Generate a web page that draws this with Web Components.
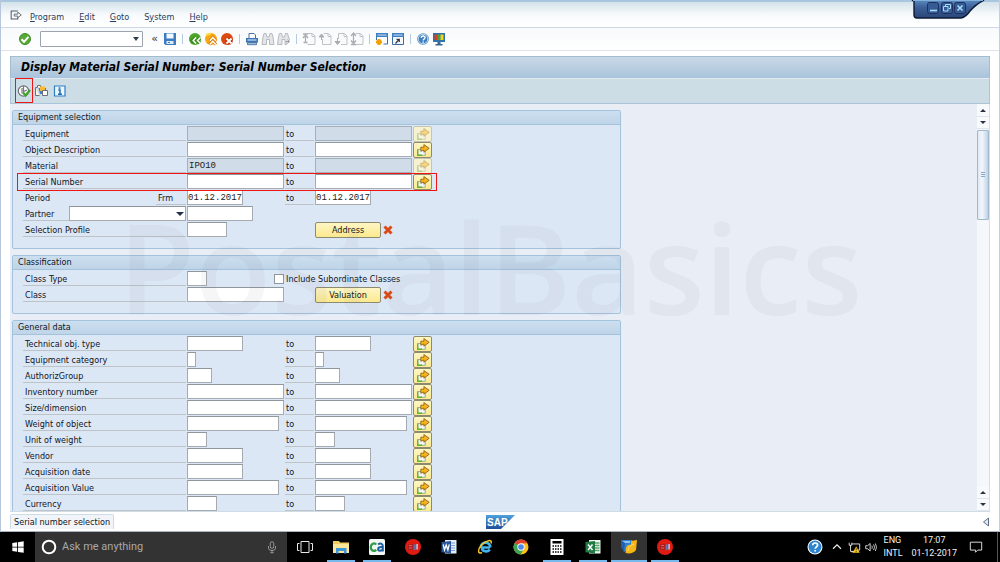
<!DOCTYPE html>
<html lang="en">
<head>
<meta charset="utf-8">
<title>Display Material Serial Number</title>
<style>
html, body { margin: 0; height: 100%; }
body { display: flex; flex-direction: column; overflow: hidden; background: #fff;
  font-family: "DejaVu Sans Condensed", "DejaVu Sans", sans-serif; font-stretch: condensed; font-size: 9px; line-height: 12px; color: #10141c; }
</style>
</head>
<body>
<desk-screen></desk-screen>
<script>
const ICONS = {
  check: '<circle cx="8" cy="8" r="5.500" fill="#58a838" stroke="#3f8f26"/><path d="M4.500 8.200l2.500 2.600 4.500-5" fill="none" stroke="#fff" stroke-width="2"/>',
  save: '<path d="M2 2h12v12H3.500L2 12.500z" fill="#3b7bbf"/><path d="M4.500 2.500h7v5h-7z" fill="#f4f8fc"/><path d="M4.500 10h7v3h-7z" fill="#dfeaf4"/><path d="M6 11.500h2" stroke="#3b7bbf"/>',
  back: '<circle cx="8" cy="8" r="6" fill="#4ea32a"/><path d="M8 7L5.200 9.500 8 12M13 7l-3 2.500L13 12" fill="none" stroke="#3c8c20" stroke-width="3.500"/><path d="M9 6.500L6.200 9.500 9 12.500M13.500 6.500l-3 3 3 3" fill="none" stroke="#fff" stroke-width="1.500"/>',
  exit: '<circle cx="8" cy="8" r="6" fill="#f7a912"/><path d="M3 4l5-1.500" stroke="#ffd84a" stroke-width="2"/><path d="M6.500 10l3.300-3.500L13 10M6.500 13.500l3.300-3.500 3.200 3.500" fill="none" stroke="#d97a0a" stroke-width="3"/><path d="M6.800 9.700l3-3.200 3 3.200M6.800 13.400l3-3.200 3 3.200" fill="none" stroke="#fff" stroke-width="1.400"/>',
  cancel: '<circle cx="8" cy="8" r="6" fill="#dc4a12"/><path d="M7.500 7.500l5 5M12.500 7.500l-5 5" stroke="#b83008" stroke-width="4"/><path d="M7.500 7.500l5 5M12.500 7.500l-5 5" stroke="#fff" stroke-width="1.900"/>',
  print: '<path d="M5 7V2.500h5L11.500 4v3" fill="#fff" stroke="#4b6f98"/><path d="M2 7h12v4.500H2z" fill="#3c76b6"/><path d="M3.500 9h9" stroke="#e8f1fa"/><path d="M3.500 11.500h9v2.200h-9z" fill="#9dbddd" stroke="#3c6898" stroke-width=".8"/>',
  find: '<path d="M3 6l1-3.500h2L7 6h2l1-3.500h2L13 6l1 7.500h-4.500V8.500h-3v5H2z" fill="#e3e5e8" stroke="#b6b9be"/>',
  findnext: '<path d="M2.500 6l1-3.500h2l1 3.500h2l1-3.500h2l1 3.500 1 3-2 1-1 3.500H9V8.500H6v5H1.500z" fill="#e3e5e8" stroke="#b6b9be"/><path d="M9.500 10.500h4m-2-2l2 2-2 2" fill="none" stroke="#9fa3a9"/>',
  pgfirst: '<path d="M6.500 2.500h5l2.500 2.500v8.500H6.500" fill="#fafafa" stroke="#bfc2c6"/><path d="M11 2.500V5.500h3" fill="none" stroke="#bfc2c6"/><path d="M2 3h5M4.500 4v7M2 7l2.500-3L7 7M2.500 11.500h4" stroke="#a9adb2" stroke-width="1.300" fill="none"/>',
  pgup: '<path d="M6.500 2.500h5l2.500 2.500v8.500H5.500V8" fill="#fafafa" stroke="#bfc2c6"/><path d="M11 2.500V5.500h3" fill="none" stroke="#bfc2c6"/><path d="M4.500 9V4M2 6l2.500-3L7 6z" stroke="#a9adb2" fill="#a9adb2"/>',
  pgdown: '<path d="M5.500 8V2.500h6L14 5v8.500H8" fill="#fafafa" stroke="#bfc2c6"/><path d="M11 2.500V5.500h3" fill="none" stroke="#bfc2c6"/><path d="M4.500 7v6M2 10.500L4.500 13.500 7 10.500z" stroke="#a9adb2" fill="#a9adb2"/>',
  pglast: '<path d="M6.500 2.500h5l2.500 2.500v8.500H7" fill="#fafafa" stroke="#bfc2c6"/><path d="M11 2.500V5.500h3" fill="none" stroke="#bfc2c6"/><path d="M4.500 3v9M2 5l2.500-3L7 5M2 9.500l2.500 3 2.500-3M2 13.500h5" stroke="#a9adb2" stroke-width="1.300" fill="none"/>',
  session: '<path d="M2.500 2.500h11v10.500h-4M2.500 9V2.500" fill="none" stroke="#3a6ea8"/><path d="M2 2h12v4H2z" fill="#3f7fc4"/><path d="M3.500 4h9" stroke="#cfe2f5"/><path d="M5 8v6M2 11h6M3 9l4 4M7 9l-4 4" stroke="#f5a100" stroke-width="1.800"/>',
  shortcut: '<path d="M2.500 2.500h11v11h-11z" fill="#f4f8fd" stroke="#3a6ea8"/><path d="M2 2h12v4H2z" fill="#3f7fc4"/><path d="M3.500 4h9" stroke="#cfe2f5"/><path d="M5.500 12.500L9 8.500M6.500 8.300H9.300V11" fill="none" stroke="#333a45" stroke-width="1.200"/>',
  help: '<circle cx="8" cy="8" r="5.800" fill="#3d7fc0"/><circle cx="8" cy="8" r="4.800" fill="none" stroke="#d5e7f6" stroke-width=".9"/><path d="M6.200 6.800c0-2.400 3.800-2.400 3.800-.2 0 1.300-1.800 1.400-1.800 2.900M8.200 10.600v1.200" fill="none" stroke="#fff" stroke-width="1.400"/>',
  monitor: '<path d="M2 2h12v9H2z" fill="#2f73ad"/><path d="M3.500 3.500h3v5.500h-3z" fill="#e03c20"/><path d="M6.500 3.500h3v5.500h-3z" fill="#49a63a"/><path d="M9.500 3.500h3v5.500h-3z" fill="#f3d021"/><path d="M6.500 11h3v2h2v1.500h-7V13h2z" fill="#3a6590"/>',
  exec: '<circle cx="7.500" cy="8" r="5.200" fill="#fff" stroke="#6b6f75" stroke-width="1.200"/><path d="M7.500 3v5.500l3.500-1.500M6 5v5.500" stroke="#777b80" fill="none" stroke-width="1.200"/><path d="M7 9.500l2.500 3 4.500-5.500" fill="none" stroke="#3fa22b" stroke-width="2.200"/>',
  variant: '<path d="M1.500 4.500h2v-2h3v2h2M1.500 4.500v8h4" fill="#fdf3e0" stroke="#6c7078"/><path d="M4.500 5H12v6H6z" fill="#3f7fc4"/><path d="M6 3.500h5V8H6z" fill="#fcb933"/><path d="M8.500 7.500h5v5h-5z" fill="#fff" stroke="#6c7078"/>',
  info: '<path d="M2.500 3h10.500v10H2.500z" fill="#eef6fd" stroke="#2c7fc4" stroke-width="1.200"/><path d="M6.300 7h1.700v4M6 11.300h4" fill="none" stroke="#1d6cb3" stroke-width="1.500"/><path d="M6.700 4.300h1.800v1.500H6.700z" fill="#1d6cb3"/>',
  multi: '<path d="M2 7.500h8.500v6.500H2z" fill="#f5f8fb" stroke="#8a9a80" stroke-width=".9"/><path d="M2 7.500V14h5" fill="none" stroke="#5fb531" stroke-width="1.500"/><path d="M5.500 9.500V4.800h3.500V1.800L15 6l-6 4.500V8z" fill="#f9b41c" stroke="#7d5a14" stroke-width=".9"/>',
  red: '<path d="M4.500 4.500l7 7M11.500 4.500l-7 7" stroke="#dd4a16" stroke-width="3"/>',
  menu: '<path d="M10 3.500H2.500v9h7.500v-2" fill="none" stroke="#565d68" stroke-width="1.200"/><path d="M6 7h4V4.800L14 8l-4 3V9.200H6z" fill="#fff" stroke="#565d68"/>',
  win: '<path d="M1.500 3.500L7 2.700v4.900H1.500zM8 2.500L14.500 1.500v6.100H8zM1.500 8.500H7v4.900l-5.500-.8zM8 8.500h6.500v6.100L8 13.600z" fill="#fff"/>',
  ring: '<circle cx="8" cy="8" r="6.300" fill="none" stroke="#fff" stroke-width="2"/>',
  mic: '<rect x="6" y="2" width="4" height="7.500" rx="2" fill="none" stroke="#a5a5a5"/><path d="M4 7v2.500q0 2.500 4 2.500t4-2.500V7M8 12v2.500M6 14.500h4" fill="none" stroke="#a5a5a5"/>',
  tasks: '<path d="M4 2.500h8v11H4z" fill="none" stroke="#e8e8e8"/><path d="M2.500 4.500h-2v7h2M13.500 4.500h2v7h-2" fill="none" stroke="#e8e8e8"/>',
  folder: '<path d="M0 2h6l1 1.500h9V14H0z" fill="#efcb62"/><path d="M0 5h16v9H0z" fill="#fce69a"/><path d="M3 9h10.500v5.500H11V12H5.500v2.500H3z" fill="#3f97d8"/>',
  ca: '<rect width="16" height="16" rx="1.500" fill="#f2f7f4"/><path d="M7.200 5.600C5.500 3.400 1.800 4.600 1.800 8.200s3.700 4.700 5.400 2.600" fill="none" stroke="#2f9a47" stroke-width="2.200"/><path d="M9 5.300c3-1.600 4.800-.4 4.800 2V12.500M13.500 8.200c-3-.4-4.600.5-4.400 2.200.2 1.900 3.400 1.700 4.600-.2" fill="none" stroke="#1c5fa0" stroke-width="2"/>',
  reddot: '<circle cx="8" cy="8" r="8" fill="#e01b12"/><path d="M3 5h5v6H3z" fill="#ab2024"/><path d="M4 6.500h3M4 9h3" stroke="#f25a3a"/><path d="M8.700 5.500h2V11h-2z" fill="#6b6fa8"/><path d="M11.200 5h1.800v5.500h-1.800z" fill="#a9b9d9"/>',
  word: '<path d="M4 1h11.500v13.500H4z" fill="#e4edf8"/><path d="M8 4h6M10 6.500h4M10 9h4M8 11.500h6" stroke="#7aa0d4"/><path d="M.5 3l9.500-1v12.500L.5 13.300z" fill="#2b579a"/><path d="M2.200 5.500l1.300 5.500L5.200 6l1.700 5L8.300 5.300" fill="none" stroke="#fff" stroke-width="1.300"/>',
  ie: '<path d="M13 8.500H5C5 13 10.500 13.300 12.800 10.600" fill="none" stroke="#42b3ec" stroke-width="2.700"/><path d="M3.700 9C3.700 2 13.300 1.800 13.300 8.600" fill="none" stroke="#42b3ec" stroke-width="2.600"/><path d="M14 4.500C16 0 9 1 4.500 6 .5 10.500.5 15.500 5 13.500" fill="none" stroke="#f6c31f" stroke-width="1.500"/>',
  chrome: '<circle cx="8" cy="8" r="7.500" fill="#fbc116"/><path d="M8 8L1.500 4.250A7.500 7.500 0 0 1 14.500 4.250L8 4.500z" fill="#dd4132"/><path d="M8 8L1.500 4.250A7.500 7.500 0 0 0 7.500 15.500L11 9.700z" fill="#3fa351"/><circle cx="8" cy="8" r="3.700" fill="#fff"/><circle cx="8" cy="8" r="2.800" fill="#4a8af0"/>',
  calc: '<path d="M1.500 0h13v16h-13z" fill="#fff"/><path d="M3.500 2h9v2.500h-9z" fill="#000"/><path d="M3.500 7h9M3.500 10h9M3.500 13h9" stroke="#000" stroke-width="1.500" stroke-dasharray="1.500 1"/>',
  excel: '<path d="M4 1h11.500v13.500H4z" fill="#eef6ee"/><path d="M10 4h4.500M10 6.500h4.500M10 9h4.500M10 11.500h4.500" stroke="#5aa568" stroke-width="1.300"/><path d="M.5 3l9.500-1v12.500L.5 13.300z" fill="#1f7a44"/><path d="M3 5.500l4.500 5.500M7.500 5.500L3 11" stroke="#fff" stroke-width="1.500"/>',
  saplogon: '<path d="M0 1h11v6l-8 6z" fill="#2f7fd0"/><path d="M1 2h8v2H1z" fill="#8cc4f2"/><path d="M0 1v7l3 5 1-9z" fill="#1f5fae"/><path d="M4.500 14C5 9 4.500 5.500 10 5.500V2l6 -1-1 10c-2 3-6 4-10.500 3z" fill="#f8b516"/><path d="M7 12c0-4 2-5 6-7" fill="none" stroke="#fde28a"/>',
  question: '<circle cx="8" cy="8" r="7.500" fill="#fff"/><circle cx="8" cy="8" r="6.500" fill="#2d86cf"/><path d="M5.700 6.300c0-3 4.900-3 4.900-.2 0 1.800-2.400 1.700-2.400 3.700M8.200 11v1.600" fill="none" stroke="#fff" stroke-width="1.700"/>',
  chevron: '<path d="M3.500 10L8 5.500l4.500 4.500" fill="none" stroke="#f0f0f0" stroke-width="1.300"/>',
  net: '<path d="M5.500 4.500h9v7h-5M2.500 3v3h3V3M4 6v7h4M5 13.500h3" fill="none" stroke="#eee"/><path d="M10.500 7l4 7.500h-8z" fill="#fcc419"/><path d="M10.500 9.500v2.300M10.500 12.700v1" stroke="#3a2a00"/>',
  volume: '<path d="M2 6.500h2L7 4v8.500L4 10H2z" fill="none" stroke="#eee"/><path d="M9 6.500q1 1.700 0 3.500M11 5q2 3.200 0 6.500M13 4q2.500 4.200 0 8.500" fill="none" stroke="#ddd"/>',
  note: '<path d="M1.500 2.500h13v9H10l-2.500 2.500v-2.500h-6z" fill="none" stroke="#f2f2f2"/>'
};

class Base extends HTMLElement {
  connectedCallback() {
    if (this.shadowRoot) return;
    this.attachShadow({ mode: 'open' }).innerHTML =
      `<style>*{box-sizing:border-box}${this.styles()}</style>${this.markup()}`;
  }
  a(name, fallback = '') { return this.getAttribute(name) ?? fallback; }
}

customElements.define('ui-icon', class extends Base {
  styles() { return `:host{display:block;width:16px;height:16px;flex:none}svg{display:block;width:100%;height:100%}`; }
  markup() { return `<svg viewBox="0 0 16 16" aria-hidden="true">${ICONS[this.a('name')]}</svg>`; }
});

customElements.define('tool-button', class extends Base {
  styles() { return `:host{display:block;flex:none}button{display:block;border:0;padding:0;background:none;width:16px;height:16px}`; }
  markup() { return `<button type="button" aria-label="${this.a('label')}"><ui-icon name="${this.a('icon')}"></ui-icon></button>`; }
});

customElements.define('sap-menubar', class extends Base {
  styles() { return `:host{display:flex;align-items:center;height:28px;padding:4px 8px 0;border-top:2px solid #a9c6e0;border-bottom:1px solid #ccd7e8;
    background:linear-gradient(#d3e2ea,#f7fafc 50%,#fff)}
    nav{display:flex;gap:15px;margin-left:7px}a{color:#2b3d5c;text-decoration:none}u{text-underline-offset:1px}ui-icon{width:14px;height:14px;margin-bottom:3px}`; }
  markup() { return `<ui-icon name="menu"></ui-icon><nav><a href="#"><u>P</u>rogram</a><a href="#"><u>E</u>dit</a><a href="#"><u>G</u>oto</a><a href="#">S<u>y</u>stem</a><a href="#"><u>H</u>elp</a></nav>`; }
});

customElements.define('window-tab', class extends Base {
  styles() { return `:host{display:block;position:absolute;top:0;right:14px;width:74px;height:20px}svg{display:block}`; }
  markup() { return `<svg width="74" height="20" viewBox="0 0 74 20" aria-hidden="true"><defs><linearGradient id="g" x2="0" y2="1"><stop offset="0" stop-color="#5b8bc0"/><stop offset=".4" stop-color="#3c6098"/><stop offset="1" stop-color="#2a4478"/></linearGradient></defs>
    <path d="M1 0L3 1V15Q3 18 6 18H50Q55 17 59 11Q65 4 73 0z" fill="url(#g)" stroke="#0d1a33" stroke-width="1.400"/><path d="M2 .5H72" stroke="#82b2dc"/>
    <g fill="#365a94" stroke="#1d3160"><rect x="16.500" y="2.500" width="11" height="11" rx="2"/><rect x="30.500" y="2.500" width="11" height="11" rx="2"/><rect x="43.500" y="2.500" width="11" height="11" rx="2"/></g>
    <path d="M19 10.500h7" stroke="#a8dcfa" stroke-width="1.600"/><path d="M34.500 6V4.500h5v4H38M32.500 6.500h4.500V11h-4.500z" fill="none" stroke="#a8dcfa"/><path d="M46.500 5.500l5 5M51.500 5.500l-5 5" stroke="#a8dcfa" stroke-width="1.600"/></svg>`; }
});

customElements.define('sap-toolbar', class extends Base {
  styles() { return `:host{display:flex;align-items:center;height:23px;padding-left:16px;background:linear-gradient(#f7f9fb,#fff);border-bottom:1px solid #dfe3ee}
    .cmd{position:relative;margin:0 4px 0 7px}.cmd input{display:block;width:103px;height:16px;border:1px solid #9aa3ae;border-radius:1px;padding:0 14px 0 2px;background:#fff;font:inherit}
    .cmd i{position:absolute;right:4px;top:6px;border:3px solid transparent;border-top:4px solid #333e50;border-bottom:0}
    .fold{border:0;background:none;padding:0;width:15px;height:16px;font:11px/14px "DejaVu Sans",sans-serif;color:#333}
    hr{width:1px;height:10px;border:0;margin:0 4px;background:#b5cadf}`; }
  markup() {
    const b = (l) => l.split(' ').map(n => n === '|' ? '<hr>' : `<tool-button icon="${n}" label="${n}"></tool-button>`).join('');
    return b('check') + '<div class="cmd"><input aria-label="Command"><i></i></div><button class="fold" type="button">«</button>' +
      b('save | back exit cancel | print find findnext | pgfirst pgup pgdown pglast | session shortcut | help monitor');
  }
});

customElements.define('sap-title', class extends Base {
  styles() { return `:host{display:block}h1{margin:0;height:23px;padding-left:10px;border:1px solid #a3bdd0;border-bottom-color:#e4e9ee;
    background:linear-gradient(#c8d9e8,#b9cddf 55%,#a8c4dd);font:italic bold 12px/21px "DejaVu Sans Condensed","DejaVu Sans",sans-serif;font-stretch:condensed;color:#000;white-space:nowrap}
    .bar{display:flex;align-items:center;gap:2px;height:25px;padding-left:5px;background:#cddde6;border:1px solid #aac4d8;border-top:0}
    .mark{position:relative}.mark::after{content:"";position:absolute;inset:-5px -1px -4px;border:1px solid #f01414;pointer-events:none}`; }
  markup() { return `<h1>${this.a('heading')}</h1><div class="bar"><tool-button class="mark" icon="exec" label="Execute"></tool-button><tool-button icon="variant" label="Get variant"></tool-button><tool-button icon="info" label="Information"></tool-button></div>`; }
});

customElements.define('sap-group', class extends Base {
  styles() { return `:host{display:block;border:1px solid #a3c2dc;border-radius:2px;background:#dce7f6}
    h2{margin:0;height:14px;padding-left:5px;font:inherit;line-height:13px;background:linear-gradient(#cbdff0,#c0d4e8);border-bottom:1px solid #a3c2dc}
    .body{padding:1px 10px 10px}`; }
  markup() { return `<h2>${this.a('heading')}</h2><div class="body"><slot></slot></div>`; }
});

const ROW = `:host{display:grid;position:relative;width:max-content;grid-template-columns:163px 97px 29px 97px 19px;column-gap:1px;height:16px;align-items:start}
  label,.to{display:block;height:15px;line-height:12px;padding:2px 0 0 2px;border-bottom:1px solid #bdc3c6;white-space:nowrap}.to{padding-left:1px}
  input:not([type]),select{display:block;height:15px;min-width:0;margin:0;padding:0 0 0 1px;border:1px solid #a5abb0;border-top-color:#8f969c;border-radius:0;background:#fff;color:#222;font:9px/13px "Liberation Mono",monospace}
  input:disabled{background:#d0dde8!important;border-color:#a5afb8}
  .act{display:block;height:16px;padding:0;border:1px solid #8d8a72;border-radius:2px;background:linear-gradient(#fff6c4,#fbe98e);font:inherit;color:inherit}
  .act ui-icon{width:14px;height:14px;margin:0 auto}.act:disabled{border-color:#c6c5b4;background:#f7f1cf}.act:disabled ui-icon{opacity:.45}
  .pair{display:flex;grid-column:4/-1}.pair .act{width:66px}.pair ui-icon.x{margin-left:-1px}
  .mark{position:absolute;z-index:1;inset:-1px -5px -1px -6px;border:1px solid #f01414;pointer-events:none}`;

customElements.define('sap-row', class extends Base {
  styles() { return ROW + `.split{display:flex;justify-content:space-between}.split label+label{width:30px}.split label:first-child{border-color:transparent}
    .chk{display:flex;align-items:center;grid-column:3/-1;border:0;padding:0;margin-left:-11px;height:16px}
    .chk input{appearance:none;flex:none;width:10px;height:10px;margin:0 2px 0 0;border:1px solid #8f969c;background:#fff}`; }
  markup() {
    const l = this.a('label'), dis = this.hasAttribute('locked') ? 'disabled' : '';
    const field = (id, w, v, name) => `<input id="${id}" aria-label="${name}" style="width:${w}px;${v.length > 8 ? 'padding:0' : ''}" value="${v}" ${dis}>`;
    let h = this.hasAttribute('sub')
      ? `<div class="split"><label for="f">${l}</label><label for="f">${this.a('sub')}</label></div>`
      : `<label for="f">${l}</label>`;
    h += field('f', this.a('w'), this.a('value'), l);
    const both = this.a('to');
    if (both) {
      h += `<label class="to" for="t">to</label>` + field('t', both, this.a('tovalue'), l + ' to');
      if (this.hasAttribute('multi')) h += `<button class="act" type="button" aria-label="Multiple selection" ${dis}><ui-icon name="multi"></ui-icon></button>`;
    }
    if (this.hasAttribute('button')) h += `<div class="pair"><button class="act" type="button">${this.a('button')}</button><ui-icon class="x" name="red"></ui-icon></div>`;
    if (this.hasAttribute('check')) h += `<label class="chk"><input type="checkbox">${this.a('check')}</label>`;
    if (this.hasAttribute('marked')) h += '<span class="mark"></span>';
    return h;
  }
});

customElements.define('sap-partner-row', class extends Base {
  styles() { return ROW + `.lead{display:flex}label{width:46px}.pick{position:relative;flex:1}.pick select{appearance:none;width:100%}
    .pick::after{content:"";position:absolute;right:2px;top:6px;border:4px solid transparent;border-top-color:#22304e;border-bottom:0}`; }
  markup() { return `<div class="lead"><label for="p">Partner</label><div class="pick"><select id="p" aria-label="Partner function"><option></option></select></div></div><input aria-label="Partner" style="width:66px">`; }
});

customElements.define('sap-scrollbar', class extends Base {
  styles() { return `:host{display:flex;flex-direction:column;width:12px;padding-top:1px;background:#f5f7fa}
    button{border:0;border-bottom:1px solid #dfe5ee;padding:0;height:12px;background:#f8fafc;display:grid;place-items:center}
    i{border:3px solid transparent}.u{border-top:0;border-bottom-color:#2c3340}.d{border-bottom:0;border-top-color:#2c3340}
    .thumb{display:grid;place-items:center;height:90px;margin-top:1px;border:1px solid #a2b9cc;border-radius:1px;background:linear-gradient(90deg,#dfe8f2,#f3f7fc 40%,#bdd2e8)}
    .thumb::after{content:"";width:4px;height:6px;background:repeating-linear-gradient(#8fa9c2 0 1px,transparent 1px 2px)}.rest{flex:1}`; }
  markup() { return `<button type="button" aria-label="Up"><i class="u"></i></button><button type="button" aria-label="Down"><i class="d"></i></button><div class="thumb"></div><div class="rest"></div><button type="button" aria-label="Up"><i class="u"></i></button><button type="button" aria-label="Down"><i class="d"></i></button>`; }
});

customElements.define('sap-status', class extends Base {
  styles() { return `:host{display:flex;justify-content:space-between;height:20px;padding:0 9px;background:#fff;border-bottom:1px solid #aab4c0}
    .tab{height:15px;margin-top:2px;padding:0 3px;line-height:15px;border:1px solid #cfdce6;border-bottom:0;background:#f1f5f9;border-radius:2px 2px 0 0;white-space:nowrap}
    .side{flex:1 1 0;display:flex}.end{justify-content:flex-end;align-items:center}
    svg{display:block;flex:none}`; }
  markup() { return `<div class="side"><div class="tab">Serial number selection</div></div>
    <svg width="29" height="20" viewBox="0 0 29 20" role="img" aria-label="SAP"><defs><linearGradient id="s" x2="0" y2="1"><stop offset="0" stop-color="#4fa0dc"/><stop offset="1" stop-color="#1d4f9a"/></linearGradient></defs><path d="M0 3h29L15 17H0z" fill="url(#s)"/><text x="1" y="14" font-family="Liberation Sans, sans-serif" font-weight="bold" font-size="10" fill="#fff">SAP</text></svg>
    <div class="side end"><svg width="8" height="12" viewBox="0 0 8 12" aria-hidden="true"><path d="M6.500 2v8L1.500 6z" fill="#dfe6f0" stroke="#5f6f88"/></svg></div>`; }
});

customElements.define('sap-window', class extends Base {
  styles() { return `:host{display:flex;flex-direction:column;flex:1;min-height:0;position:relative;border-left:1px solid #b8c6dc;border-right:1px solid #c6cedb;background:#fff}
    main{display:flex;flex-direction:column;flex:1;min-height:0;margin:5px 9px 0}
    .work{display:flex;flex:1;min-height:0;overflow:hidden;background:#e9edf6;border-bottom:1px solid #cfdbe5;border-right:1px solid #d7e0ea}
    .groups{display:flex;flex-direction:column;gap:6px;flex:1;padding:6px 0 0 2px}sap-group{width:100%;max-width:609px;flex:none}
    .water{position:absolute;left:117px;top:184px;font:600 125px/166px "Open Sans",sans-serif;color:rgba(110,100,120,.06);pointer-events:none;white-space:nowrap}`; }
  markup() {
    const rows = [['Technical obj. type', 56], ['Equipment category', 9], ['AuthorizGroup', 25], ['Inventory number', 97], ['Size/dimension', 97], ['Weight of object', 92], ['Unit of weight', 20], ['Vendor', 56], ['Acquisition date', 56], ['Acquisition Value', 92], ['Currency', 30]];
    return `<sap-menubar></sap-menubar><window-tab></window-tab><sap-toolbar></sap-toolbar>
    <main><sap-title heading="Display Material Serial Number: Serial Number Selection"></sap-title>
    <div class="work"><div class="groups">
      <sap-group heading="Equipment selection">
        <sap-row label="Equipment" w="97" to="97" multi locked></sap-row>
        <sap-row label="Object Description" w="97" to="97" multi></sap-row>
        <sap-row label="Material" w="97" to="97" value="IPO10" multi locked></sap-row>
        <sap-row label="Serial Number" w="97" to="97" multi marked></sap-row>
        <sap-row label="Period" sub="Frm" w="56" to="56" value="01.12.2017" tovalue="01.12.2017"></sap-row>
        <sap-partner-row></sap-partner-row>
        <sap-row label="Selection Profile" w="40" button="Address"></sap-row>
      </sap-group>
      <sap-group heading="Classification">
        <sap-row label="Class Type" w="20" check="Include Subordinate Classes"></sap-row>
        <sap-row label="Class" w="97" button="Valuation"></sap-row>
      </sap-group>
      <sap-group heading="General data">${rows.map(([l, w]) => `<sap-row label="${l}" w="${w}" to="${w}" multi></sap-row>`).join('')}</sap-group>
    </div><sap-scrollbar></sap-scrollbar></div></main>
    <sap-status></sap-status><div class="water">PostalBasics</div>`;
  }
});

customElements.define('task-bar', class extends Base {
  styles() { return `:host{display:flex;flex:none;height:30px;background:#000;color:#f2f2f2;font:9px/13px Roboto,sans-serif}
    button{display:grid;place-items:center;border:0;padding:0;background:none;width:36px;height:30px;color:inherit;font:inherit;position:relative}
    .search{display:flex;align-items:center;width:252px;padding:0 6px;background:#333;gap:5px}
    .search input{flex:1;min-width:0;border:0;padding:0;background:none;color:#fff;font:11px/16px Roboto,sans-serif}input::placeholder{color:#a8a8a8;opacity:1}
    .search ui-icon:last-child{width:14px;height:14px;margin-right:2px}.start{width:35px}.start ui-icon{width:14px;height:14px}
    .run::after{content:"";position:absolute;left:4px;right:4px;bottom:0;height:2px;background:#76b9ed}.active{background:#333}.active::after{left:0;right:0}
    .tray{display:flex;align-items:center;margin-left:auto}.tray>ui-icon{width:14px;height:14px;margin-right:3px}.tray .q{width:16px;height:16px;margin-right:7px}
    .lang{margin:0 9px 0 0}.time{text-align:center}.tray .note{margin:0 14px 0 12px}.edge{width:1px;align-self:stretch;background:#555;margin-right:2px}.tray .v{margin-right:6px}`; }
  markup() {
    const apps = [['tasks', ''], ['folder', 'run'], ['ca', 'run'], ['reddot', ''], ['word', ''], ['ie', ''], ['chrome', ''], ['calc', 'run'], ['excel', 'run'], ['saplogon', 'run active'], ['reddot', 'run']];
    return `<button class="start" aria-label="Start"><ui-icon name="win"></ui-icon></button>
    <div class="search"><ui-icon name="ring"></ui-icon><input aria-label="Search" placeholder="Ask me anything"><ui-icon name="mic"></ui-icon></div>
    ${apps.map(([n, c]) => `<button class="${c}" aria-label="${n}"><ui-icon name="${n}"></ui-icon></button>`).join('')}
    <div class="tray"><ui-icon class="q" name="question"></ui-icon><ui-icon name="chevron"></ui-icon><ui-icon name="net"></ui-icon><ui-icon class="v" name="volume"></ui-icon>
    <div class="lang">ENG<br>INTL</div><div class="time">17:07<br>01-12-2017</div><ui-icon class="note" name="note"></ui-icon><div class="edge"></div></div>`;
  }
});

customElements.define('desk-screen', class extends Base {
  styles() { return `:host{display:flex;flex-direction:column;flex:1;min-height:0}`; }
  markup() { return `<sap-window></sap-window><task-bar></task-bar>`; }
});
</script>
</body>
</html>
